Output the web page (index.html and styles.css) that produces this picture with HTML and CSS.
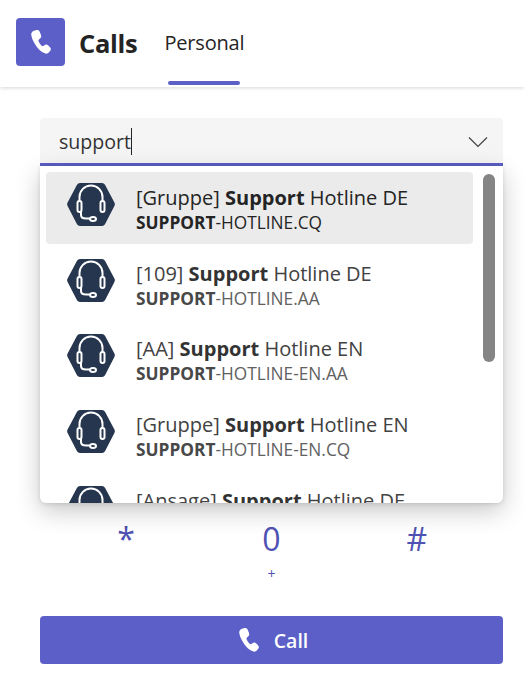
FILE: index.html
```html
<!DOCTYPE html>
<html lang="en">
<head>
<meta charset="utf-8">
<title>Calls</title>
<link rel="stylesheet" href="styles.css">
</head>
<body>
<svg class="defs" width="0" height="0">
  <defs>
    <symbol id="phone" viewBox="0 0 20 24">
      <path d="M3 .8 5.500 .1C7-.3 8 .3 8.600 1.600L10 5C10.500 6.300 10.200 7.500 9.300 8.300L7.800 9.700C7.400 10.100 7.300 10.500 7.500 11 8.300 13 9.500 14.700 11 16 11.400 16.300 11.800 16.300 12.200 16.100L14 14.900C15 14.300 16.200 14.400 17 15.200L19 17.300C20 18.300 20.100 19.500 19.400 20.500L17.800 22.600C17 23.600 15.700 24 14.400 23.600 10.500 22.300 7.300 19.600 4.500 15 2 11 .5 7.500 .2 4.500 .1 2.900 1.200 1.400 3 .8Z"/>
    </symbol>
    <symbol id="agent" viewBox="0 0 48 43">
      <path class="hex" d="M13 0h22a3.500 3.500 0 0 1 3 1.700l9.400 17.800a3.500 3.500 0 0 1 0 3.400L38 41.300a3.500 3.500 0 0 1-3 1.700H13a3.500 3.500 0 0 1-3-1.700L.6 22.900a3.500 3.500 0 0 1 0-3.400L10 1.700A3.500 3.500 0 0 1 13 0Z"/>
      <g class="set">
        <path d="M12.500 19v-5a11.500 11.500 0 0 1 23 0v5"/>
        <rect x="10.500" y="18" width="4" height="11" rx="2"/>
        <rect x="33.500" y="18" width="4" height="11" rx="2"/>
        <path d="M14 29v3c0 2.500 2 3.500 5 3.500h4"/>
        <ellipse cx="26" cy="36" rx="3" ry="2"/>
      </g>
    </symbol>
  </defs>
</svg>

<header class="topbar">
  <div class="app-icon"><svg class="app-phone"><use href="#phone"/></svg></div>
  <h1 class="app-title">Calls</h1>
  <nav class="tabs"><a class="tab">Personal</a></nav>
</header>

<main class="content">
  <div class="combo">
    <div class="field">
      <span class="value">support</span><span class="caret"></span>
      <svg class="chevron" viewBox="0 0 20 12"><path d="M1 1.500 10 10.500 19 1.500"/></svg>
    </div>
    <div class="menu">
      <div class="thumb"></div>
      <ul class="list">
        <li class="row active">
          <svg class="avatar"><use href="#agent"/></svg>
          <div class="lines"><div class="name">[Gruppe] <b>Support</b> Hotline DE</div><div class="sub"><b>SUPPORT</b>-HOTLINE.CQ</div></div>
        </li>
        <li class="row">
          <svg class="avatar"><use href="#agent"/></svg>
          <div class="lines"><div class="name">[109] <b>Support</b> Hotline DE</div><div class="sub"><b>SUPPORT</b>-HOTLINE.AA</div></div>
        </li>
        <li class="row">
          <svg class="avatar"><use href="#agent"/></svg>
          <div class="lines"><div class="name">[AA] <b>Support</b> Hotline EN</div><div class="sub"><b>SUPPORT</b>-HOTLINE-EN.AA</div></div>
        </li>
        <li class="row">
          <svg class="avatar"><use href="#agent"/></svg>
          <div class="lines"><div class="name">[Gruppe] <b>Support</b> Hotline EN</div><div class="sub"><b>SUPPORT</b>-HOTLINE-EN.CQ</div></div>
        </li>
        <li class="row">
          <svg class="avatar"><use href="#agent"/></svg>
          <div class="lines"><div class="name">[Ansage] <b>Support</b> Hotline DE</div></div>
        </li>
      </ul>
    </div>
  </div>

  <div class="keys">
    <div class="key"><span class="digit">*</span></div>
    <div class="key"><span class="digit">0</span><span class="letters">+</span></div>
    <div class="key"><span class="digit">#</span></div>
  </div>

  <button class="call"><svg class="call-phone"><use href="#phone"/></svg><span>Call</span></button>
</main>
</body>
</html>
```

FILE: styles.css
```css
* { box-sizing: border-box; }
html, body { margin: 0; height: 100%; }
body {
  width: 524px;
  height: 680px;
  overflow: hidden;
  background: #fff;
  color: #242424;
  font-family: "Open Sans", "Noto Sans", sans-serif;
}
.defs { position: absolute; }

.topbar {
  height: 87px;
  display: flex;
  align-items: flex-start;
  padding: 18px 0 0 16px;
  box-shadow: 0 1px 4px rgba(0, 0, 0, .16);
  background: #fff;
  position: relative;
}
.app-icon {
  width: 49px;
  height: 48px;
  border-radius: 4px;
  background: #5b5fc7;
  display: flex;
  align-items: center;
  justify-content: center;
}
.app-phone { width: 20px; height: 24px; fill: #fff; }
.app-title {
  margin: 8px 0 0 14px;
  font-size: 25.500px;
  line-height: 34px;
  font-weight: 700;
  letter-spacing: -.3px;
}
.tabs { margin-left: 31px; height: 69px; }
.tab {
  display: flex;
  justify-content: center;
  width: 72px;
  height: 67px;
  padding-top: 11px;
  font-size: 20px;
  line-height: 27px;
  white-space: nowrap;
  position: relative;
  letter-spacing: -.2px;
}
.tab::after {
  content: "";
  position: absolute;
  left: 0;
  right: 0;
  bottom: 0;
  height: 4px;
  border-radius: 2px;
  background: #5b5fc7;
}

.content { padding: 31px 21px 0 40px; }

.combo { position: relative; height: 48px; }
.field {
  height: 48px;
  background: #f5f5f5;
  border-radius: 4px 4px 0 0;
  border-bottom: 3px solid #5b5fc7;
  padding: 9px 0 0 19px;
  font-size: 19.600px;
  line-height: 30px;
  color: #333;
  position: relative;
  display: flex;
  align-items: flex-start;
}
.caret {
  display: block;
  width: 1px;
  height: 27px;
  margin: 1px 0 0 0;
  background: #242424;
}
.chevron {
  position: absolute;
  right: 15px;
  top: 18px;
  width: 20px;
  height: 12px;
  fill: none;
  stroke: #424242;
  stroke-width: 1.200;
}

.menu {
  position: absolute;
  z-index: 2;
  left: 0;
  right: 0;
  top: 48px;
  height: 337px;
  background: #fff;
  border-radius: 0 0 6px 6px;
  box-shadow: 0 8px 24px rgba(0, 0, 0, .22), 0 1px 4px rgba(0, 0, 0, .12);
  overflow: hidden;
  padding: 6px 30px 0 6px;
}
.thumb {
  position: absolute;
  right: 8px;
  top: 8px;
  width: 12px;
  height: 188px;
  border-radius: 6px;
  background: #858585;
}
.list { list-style: none; margin: 0; padding: 0; }
.row {
  height: 72px;
  margin-bottom: 3.700px;
  padding: 11px 0 0 21px;
  border-radius: 4px;
  display: flex;
  align-items: flex-start;
  color: #424242;
}
.row.active { background: #ebebeb; color: #242424; }
.avatar { width: 48px; height: 43px; flex: none; margin-right: 21px; }
.hex { fill: #26364f; }
.set { fill: none; stroke: #fff; stroke-width: 2; }
.lines { white-space: nowrap; margin-top: 2px; }
.name { font-size: 20px; line-height: 26px; }
.sub { font-size: 17.300px; line-height: 23px; color: #616161; }
.active .sub { color: #242424; }
.name b { color: #333; }
.sub b { color: #484848; }
.active .name b, .active .sub b { color: #242424; }

.keys {
  display: grid;
  grid-template-columns: repeat(3, 1fr);
  margin-top: 351px;
  height: 71px;
}
.key {
  display: flex;
  flex-direction: column;
  align-items: center;
  color: #4f52b2;
}
.digit { font-size: 32px; line-height: 44px; font-weight: 500; }
.letters { font-size: 14px; line-height: 18px; margin-top: 4px; }
.key:nth-child(1) { transform: translateX(9px); }
.key:nth-child(3) { transform: translateX(-9px); }

.call {
  display: flex;
  align-items: center;
  justify-content: center;
  gap: 15px;
  width: 100%;
  height: 48px;
  margin-top: 28px;
  padding: 0 0 0 4px;
  border: 0;
  border-radius: 4px;
  background: #5b5fc7;
  color: #fff;
  font-family: inherit;
  font-size: 19.500px;
  font-weight: 600;
}
.call-phone { width: 20px; height: 24px; fill: #fff; }
```
